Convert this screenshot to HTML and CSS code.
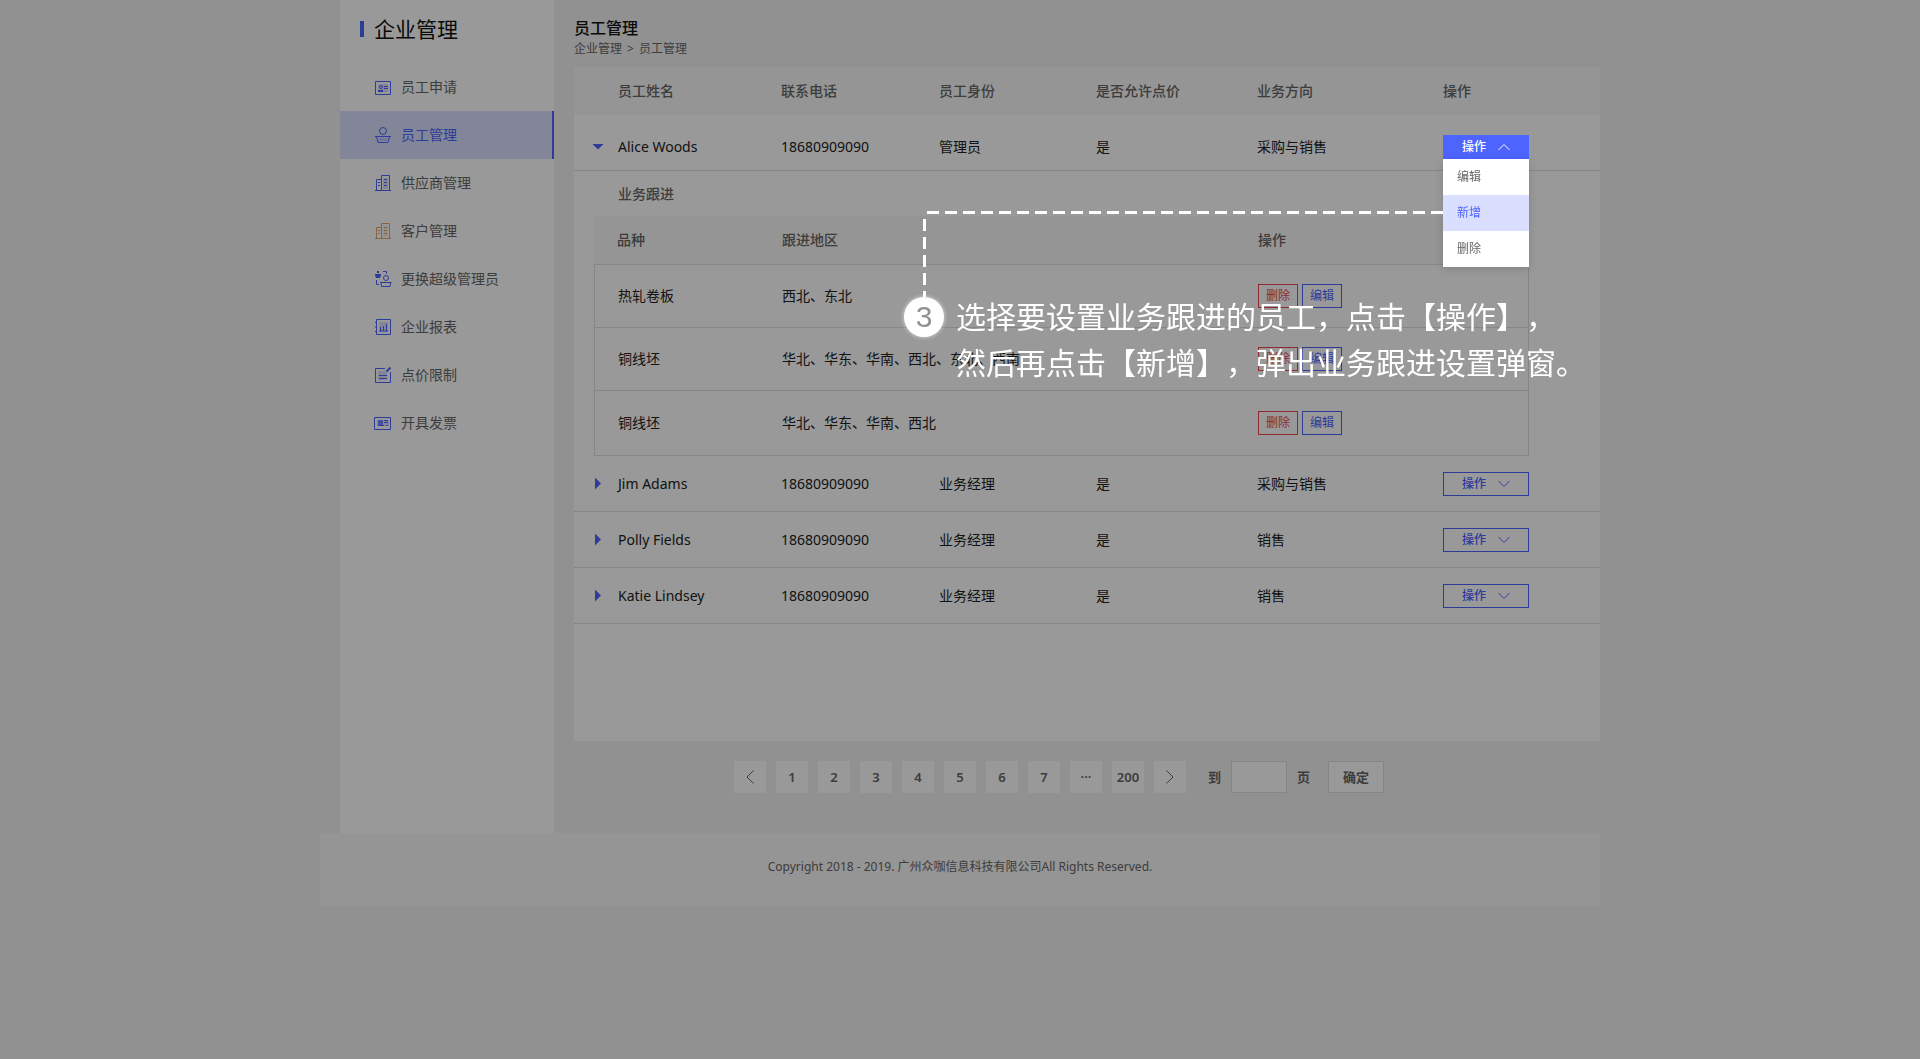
FILE: index.html
```html
<!DOCTYPE html>
<html lang="zh-CN">
<head>
<meta charset="utf-8">
<meta name="viewport" content="width=device-width, initial-scale=1">
<title>员工管理</title>
<link rel="stylesheet" href="styles.css">
</head>
<body>
<svg class="sprite" aria-hidden="true">
  <symbol id="chevron-down" viewBox="0 0 12 8"><path d="M.5 1 6 6.500 11.500 1" fill="none" stroke="currentColor"/></symbol>
  <symbol id="chevron-up" viewBox="0 0 12 8"><path d="M.5 7 6 1.500 11.500 7" fill="none" stroke="currentColor"/></symbol>
  <symbol id="building" viewBox="0 0 16 16">
    <path d="M8 3h5v11H8z" fill="currentColor" opacity=".2"/>
    <path d="M6.500 15V.5h8V15M1.500 15V4.500h5M0 15.500h16M9 4.500h3M9 7.500h3M9 10.500h3M3 7.500h2M3 10.500h2" fill="none" stroke="currentColor"/>
  </symbol>
</svg>

<div class="page">
  <div class="layout">
    <aside class="sidebar">
      <h2 class="sidebar-title">企业管理</h2>
      <nav class="menu">
        <a class="menu-item" href="#">
          <svg class="icon" viewBox="0 0 16 16"><path d="M3 5h10v8H3z" fill="currentColor" opacity=".2"/><path d="M.5 2.500h15v13H.5zM9 7.500h4M9 9.500h4" fill="none" stroke="currentColor"/><circle cx="6" cy="8" r="1.500" fill="none" stroke="currentColor"/><path d="M3 11h5v2H3z" fill="currentColor"/></svg>
          员工申请</a>
        <a class="menu-item active" href="#">
          <svg class="icon" viewBox="0 0 16 16"><circle cx="8" cy="4" r="3.500" fill="none" stroke="currentColor"/><path d="M3 11h10l-1 3H4z" fill="currentColor" opacity=".2"/><path d="M0 9.500h16M1.500 10 3 15.500h10L14.500 10" fill="none" stroke="currentColor"/></svg>
          员工管理</a>
        <a class="menu-item" href="#"><svg class="icon"><use href="#building"/></svg>供应商管理</a>
        <a class="menu-item" href="#"><svg class="icon orange"><use href="#building"/></svg>客户管理</a>
        <a class="menu-item" href="#">
          <svg class="icon" viewBox="0 0 16 16"><path d="M2 0h2v2H2zM0 3h6v1L5 7H1L0 4z" fill="currentColor"/><circle cx="11" cy="7" r="2.500" fill="none" stroke="currentColor"/><path d="M8 .5h3.500V3M1.500 9v4.500H4M5 11.500h11.500M6 12l.5 3.500h8.500l.5-3.500" fill="none" stroke="currentColor"/></svg>
          更换超级管理员</a>
        <a class="menu-item" href="#">
          <svg class="icon" viewBox="0 0 16 16"><path d="M4 3h9v10H4z" fill="currentColor" opacity=".2"/><path d="M1.500.5h14v15h-14zM0 3.500h2M0 8h2M0 12.500h2" fill="none" stroke="currentColor"/><path d="M4 12h9M5.500 12V8M8.500 12V7M11.500 12V5" fill="none" stroke="currentColor"/></svg>
          企业报表</a>
        <a class="menu-item" href="#">
          <svg class="icon" viewBox="0 0 16 16"><path d="M3 4h9v9H3z" fill="currentColor" opacity=".2"/><path d="M10 1.500H.5v14h15V5M4 8.500h8M4 11.500h8" fill="none" stroke="currentColor"/><path d="M11.500 4.500 15.500.5" stroke="currentColor" stroke-width="2"/></svg>
          点价限制</a>
        <a class="menu-item" href="#">
          <svg class="icon" viewBox="0 0 16 16"><path d="M-.5 2.500h16v12h-16z" fill="none" stroke="currentColor"/><path d="M3 5h5v5H3z" fill="currentColor" opacity=".7"/><path d="M2 5h12v6H2z" fill="currentColor" opacity=".2"/><path d="M9 5.500h4M9 7.500h4M11 10.500h2M3 10.500h6" stroke="currentColor"/></svg>
          开具发票</a>
      </nav>
    </aside>

    <main class="main">
      <header class="page-head">
        <h1 class="page-title">员工管理</h1>
        <p class="breadcrumb"><a href="#">企业管理</a><span>&gt;</span><span>员工管理</span></p>
      </header>

      <section class="card">
        <table class="staff">
          <colgroup><col class="c-name"><col class="c-phone"><col class="c-role"><col class="c-price"><col class="c-field"><col class="c-action"></colgroup>
          <thead>
            <tr><th>员工姓名</th><th>联系电话</th><th>员工身份</th><th>是否允许点价</th><th>业务方向</th><th>操作</th></tr>
          </thead>
          <tbody>
            <tr class="row expanded">
              <td><div class="name"><button class="toggle open" aria-label="收起"></button>Alice Woods</div></td>
              <td>18680909090</td><td>管理员</td><td>是</td><td>采购与销售</td>
              <td>
                <div class="dropdown">
                  <button class="action action-open">操作<svg class="chevron"><use href="#chevron-up"/></svg></button>
                  <div class="options">
                    <button class="option">编辑</button>
                    <button class="option selected">新增</button>
                    <button class="option">删除</button>
                  </div>
                </div>
              </td>
            </tr>
            <tr>
              <td class="detail" colspan="6">
                <h3 class="detail-title">业务跟进</h3>
                <table class="follow">
                  <colgroup><col class="f-kind"><col class="f-area"><col class="f-action"></colgroup>
                  <thead><tr><th>品种</th><th>跟进地区</th><th>操作</th></tr></thead>
                  <tbody>
                    <tr><td>热轧卷板</td><td>西北、东北</td><td><div class="buttons"><button class="small danger">删除</button><button class="small">编辑</button></div></td></tr>
                    <tr><td>铜线坯</td><td>华北、华东、华南、西北、东北、西南</td><td><div class="buttons"><button class="small danger">删除</button><button class="small">编辑</button></div></td></tr>
                    <tr><td>铜线坯</td><td>华北、华东、华南、西北</td><td><div class="buttons"><button class="small danger">删除</button><button class="small">编辑</button></div></td></tr>
                  </tbody>
                </table>
              </td>
            </tr>
            <tr class="row">
              <td><div class="name"><button class="toggle" aria-label="展开"></button>Jim Adams</div></td>
              <td>18680909090</td><td>业务经理</td><td>是</td><td>采购与销售</td>
              <td><button class="action">操作<svg class="chevron"><use href="#chevron-down"/></svg></button></td>
            </tr>
            <tr class="row">
              <td><div class="name"><button class="toggle" aria-label="展开"></button>Polly Fields</div></td>
              <td>18680909090</td><td>业务经理</td><td>是</td><td>销售</td>
              <td><button class="action">操作<svg class="chevron"><use href="#chevron-down"/></svg></button></td>
            </tr>
            <tr class="row">
              <td><div class="name"><button class="toggle" aria-label="展开"></button>Katie Lindsey</div></td>
              <td>18680909090</td><td>业务经理</td><td>是</td><td>销售</td>
              <td><button class="action">操作<svg class="chevron"><use href="#chevron-down"/></svg></button></td>
            </tr>
          </tbody>
        </table>

        <div class="guide">
          <svg class="guide-line" viewBox="0 0 520 83"><path d="M4 1.500H520M1.500 8V86" fill="none" stroke="#fff" stroke-width="3" stroke-dasharray="12 6"/></svg>
          <div class="guide-body">
            <span class="guide-step">3</span>
            <p class="guide-text">选择要设置业务跟进的员工，点击【操作】，<br>然后再点击【新增】，弹出业务跟进设置弹窗。</p>
          </div>
        </div>
      </section>

      <nav class="pager" aria-label="分页">
        <button class="page-button" aria-label="上一页"><svg class="arrow" viewBox="0 0 8 14"><path d="M7.500.5 1 7l6.500 6.500" fill="none" stroke="currentColor"/></svg></button>
        <button class="page-button">1</button>
        <button class="page-button">2</button>
        <button class="page-button">3</button>
        <button class="page-button">4</button>
        <button class="page-button">5</button>
        <button class="page-button">6</button>
        <button class="page-button">7</button>
        <button class="page-button">···</button>
        <button class="page-button">200</button>
        <button class="page-button" aria-label="下一页"><svg class="arrow" viewBox="0 0 8 14"><path d="M.5.5 7 7 .5 13.500" fill="none" stroke="currentColor"/></svg></button>
        <div class="jump">
          <label for="jump-page">到</label>
          <input class="jump-input" id="jump-page" type="text">
          <span>页</span>
        </div>
        <button class="confirm">确定</button>
      </nav>
    </main>
  </div>

  <footer class="footer">Copyright 2018 - 2019. 广州众咖信息科技有限公司All Rights Reserved.</footer>
</div>

<div class="mask"></div>
</body>
</html>
```
FILE: styles.css
```css
* {
  box-sizing: border-box;
}

body {
  margin: 0;
  background: #f2f2f2;
  color: #222;
  font: 14px/20px "Noto Sans", "Noto Sans CJK SC", sans-serif;
  text-spacing-trim: space-all;
}

h1, h2, h3, p {
  margin: 0;
}

button, input {
  margin: 0;
  padding: 0;
  border: 0;
  border-radius: 0;
  background: none;
  color: inherit;
  font: inherit;
}

a {
  color: inherit;
  text-decoration: none;
}

.sprite {
  position: absolute;
  width: 0;
  height: 0;
}

.page {
  max-width: 1280px;
  margin: 0 auto;
}

.layout {
  display: flex;
  gap: 20px;
  padding-left: 20px;
}

/* Sidebar */
.sidebar {
  flex: 0 0 214px;
  background: #fff;
}

.sidebar-title {
  display: flex;
  align-items: center;
  gap: 10px;
  height: 63px;
  padding: 0 20px 6px;
  color: #111;
  font-size: 21px;
  font-weight: 400;
}

.sidebar-title::before {
  content: "";
  width: 4px;
  height: 16px;
  background: #4d64ff;
}

.menu-item {
  display: flex;
  align-items: center;
  gap: 10px;
  height: 48px;
  padding-left: 35px;
  color: #666;
}

.menu-item.active {
  border-right: 2px solid #4d64ff;
  background: #dbdfff;
  color: #4d64ff;
}

.icon {
  width: 16px;
  height: 16px;
  overflow: visible;
  color: #4d64ff;
}

.icon.orange {
  color: #dfa66c;
}

/* Page head */
.main {
  flex: 1;
  min-width: 0;
}

.page-head {
  height: 67px;
  padding-top: 17px;
}

.page-title {
  color: #111;
  font-size: 16px;
  font-weight: 500;
  line-height: 22px;
}

.breadcrumb {
  display: flex;
  gap: 5px;
  color: #666;
  font-size: 12px;
}

/* Staff table */
.card {
  position: relative;
  min-height: 674px;
  background: #fff;
}

table {
  width: 100%;
  border-spacing: 0;
  table-layout: fixed;
}

th, td {
  padding: 0;
  text-align: left;
}

th {
  height: 48px;
  background: #f8f8f8;
  color: #666;
  font-weight: 500;
}

.c-name { width: 207px; }
.c-phone { width: 158px; }
.c-role { width: 157px; }
.c-price { width: 161px; }
.c-field { width: 186px; }
.c-action { width: 157px; }

.staff > thead th:first-child {
  padding-left: 44px;
}

.row > td {
  height: 56px;
  border-bottom: 1px solid #e0e0e0;
}

.expanded > td {
  padding-top: 8px;
}

.name {
  display: flex;
  align-items: center;
  gap: 12px;
  padding-left: 16px;
}

.toggle {
  display: flex;
  justify-content: center;
  width: 16px;
}

.toggle::before {
  content: "";
  width: 6px;
  height: 12px;
  background: #4d64ff;
  clip-path: polygon(0 0, 100% 50%, 0 100%);
}

.toggle.open::before {
  width: 12px;
  height: 6px;
  clip-path: polygon(0 0, 100% 0, 50% 100%);
}

.action {
  display: flex;
  align-items: center;
  justify-content: center;
  gap: 12px;
  width: 86px;
  height: 24px;
  border: 1px solid #4d64ff;
  color: #4d64ff;
  font-size: 12px;
  font-weight: 500;
}

.action-open {
  background: #4d64ff;
  color: #fff;
}

.chevron {
  width: 12px;
  height: 8px;
}

.dropdown {
  position: relative;
  z-index: 20;
  width: 86px;
}

.options {
  position: absolute;
  top: 100%;
  left: 0;
  width: 100%;
  background: #fff;
  box-shadow: 0 2px 8px rgba(0, 0, 0, .15);
}

.option {
  display: block;
  width: 100%;
  height: 36px;
  padding-left: 14px;
  color: #666;
  font-size: 12px;
  text-align: left;
}

.option.selected {
  background: #dbdfff;
  color: #4d64ff;
}

/* Follow-up detail */
.detail {
  padding: 0 71px 0 20px;
}

.detail-title {
  padding-left: 24px;
  color: #666;
  font-size: 14px;
  font-weight: 500;
  line-height: 45px;
}

.f-kind { width: 188px; }
.f-area { width: 476px; }
.f-action { width: 271px; }

.follow th {
  height: 49px;
  border-bottom: 1px solid #e0e0e0;
}

.follow td {
  height: 63px;
  border-bottom: 1px solid #e0e0e0;
}

.follow tr:last-child td {
  height: 65px;
}

.follow tr > :first-child {
  padding-left: 23px;
}

.follow td:first-child {
  border-left: 1px solid #e0e0e0;
}

.follow td:last-child {
  border-right: 1px solid #e0e0e0;
}

.buttons {
  display: flex;
  gap: 4px;
}

.small {
  width: 40px;
  height: 24px;
  border: 1px solid #4d64ff;
  color: #4d64ff;
  font-size: 12px;
}

.small.danger {
  border-color: #f04650;
  color: #f04650;
}

/* Pager */
.pager {
  display: flex;
  align-items: center;
  gap: 10px;
  padding: 20px 0 40px 160px;
  color: #666;
  font-weight: 600;
  font-size: 13px;
}

.page-button {
  display: flex;
  align-items: center;
  justify-content: center;
  width: 32px;
  height: 32px;
  background: #fff;
}

.arrow {
  width: 8px;
  height: 14px;
}

.jump {
  display: flex;
  align-items: center;
  gap: 10px;
  margin: 0 8px 0 12px;
}

.jump-input,
.confirm {
  width: 56px;
  height: 32px;
  border: 1px solid #e0e0e0;
  background: #fff;
}

.footer {
  padding: 24px 0 28px;
  background: #f8f8f8;
  color: #666;
  font-size: 12px;
  text-align: center;
}

/* Guide overlay */
.mask {
  position: fixed;
  inset: 0;
  z-index: 10;
  background: rgba(0, 0, 0, .4);
}

.guide {
  position: absolute;
  top: 144px;
  left: 330px;
  z-index: 20;
  color: #fff;
  pointer-events: none;
}

.guide-line {
  display: block;
  width: 520px;
  height: 83px;
  margin-left: 19px;
  overflow: visible;
}

.guide-body {
  display: flex;
  align-items: flex-start;
  gap: 12px;
}

.guide-step {
  width: 40px;
  height: 40px;
  margin-top: 3px;
  border-radius: 50%;
  background: #fff;
  box-shadow: 0 0 4px rgba(255, 255, 255, .7);
  color: #919191;
  font: 30px/40px "Liberation Sans", sans-serif;
  text-align: center;
}

.guide-text {
  font-size: 30px;
  line-height: 46px;
  white-space: nowrap;
}
```
